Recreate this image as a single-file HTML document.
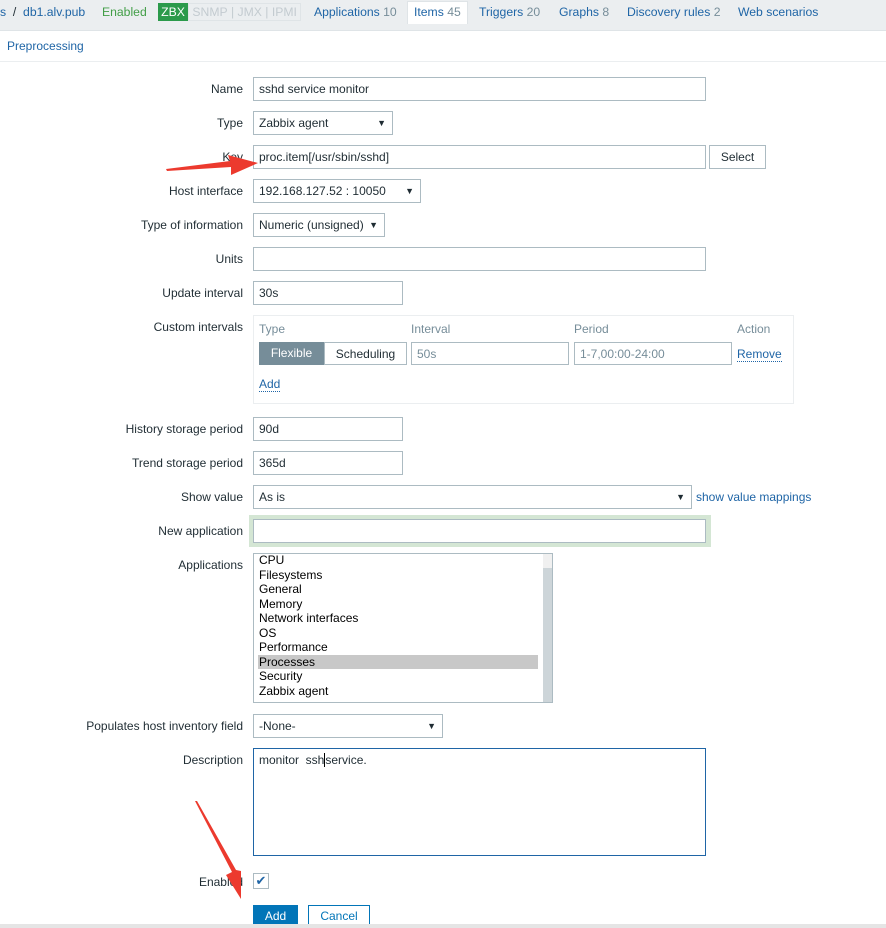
<!DOCTYPE html>
<html><head><meta charset="utf-8"><style>
body{margin:0;width:886px;height:928px;background:#fff;font-family:"Liberation Sans",Arial,sans-serif;font-size:12px;color:#1f2c33;position:relative;overflow:hidden}
.a{position:absolute}
.lbl{position:absolute;right:643px;text-align:right;white-space:nowrap;color:#1f2c33}
.in{position:absolute;box-sizing:border-box;border:1px solid #acbbc2;background:#fff;height:24px;padding:0 5px;line-height:22px;white-space:nowrap}
.sel::after{content:"▼";position:absolute;right:6px;top:0;font-size:9px}
.link{color:#1f65a6}
.tab{position:absolute;top:5px;color:#1f65a6;font-size:12.2px}
</style></head><body>
<div class="a" style="left:0;top:0;width:886px;height:30px;background:#ebeef0;border-bottom:1px solid #dfe4e7"></div>
<div class="tab" style="left:0"><span class="link">s</span> <span style="color:#1f2c33">&nbsp;/&nbsp;</span> <span class="link">db1.alv.pub</span></div>
<div class="tab" style="left:102px;color:#429e47">Enabled</div>
<div class="a" style="left:158px;top:3px;width:30px;height:18px;background:#2b9a4b;color:#fff;font-size:12.2px;text-align:center;line-height:18px">ZBX</div>
<div class="a" style="left:188px;top:3px;height:16px;border:1px solid #dfe4e7;color:#c3cbd0;font-size:12.2px;line-height:16px;white-space:nowrap">&nbsp;SNMP&nbsp;|&nbsp;JMX&nbsp;|&nbsp;IPMI&nbsp;</div>
<div class="tab" style="left:314px">Applications <span style="color:#768d99">10</span></div>
<div class="a" style="left:407px;top:1px;width:59px;height:22px;background:#fff;border:1px solid #dfe4e7;border-bottom:none"></div>
<div class="tab" style="left:414px">Items <span style="color:#768d99">45</span></div>
<div class="tab" style="left:479px">Triggers <span style="color:#768d99">20</span></div>
<div class="tab" style="left:559px">Graphs <span style="color:#768d99">8</span></div>
<div class="tab" style="left:627px">Discovery rules <span style="color:#768d99">2</span></div>
<div class="tab" style="left:738px">Web scenarios</div>
<div class="a link" style="left:7px;top:39px">Preprocessing</div>
<div class="a" style="left:0;top:61px;width:886px;height:1px;background:#ebeef0"></div>

<div class="lbl" style="top:82px">Name</div><div class="in" style="left:253px;top:77px;width:453px">sshd service monitor</div>
<div class="lbl" style="top:116px">Type</div><div class="in sel" style="left:253px;top:111px;width:140px">Zabbix agent</div>
<div class="lbl" style="top:150px">Key</div><div class="in" style="left:253px;top:145px;width:453px">proc.item[/usr/sbin/sshd]</div>
<div class="in" style="left:709px;top:145px;width:57px;text-align:center;background:#fff;border-color:#acbbc2">Select</div>
<div class="lbl" style="top:184px">Host interface</div><div class="in sel" style="left:253px;top:179px;width:168px">192.168.127.52 : 10050</div>
<div class="lbl" style="top:218px">Type of information</div><div class="in sel" style="left:253px;top:213px;width:132px">Numeric (unsigned)</div>
<div class="lbl" style="top:252px">Units</div><div class="in" style="left:253px;top:247px;width:453px"></div>
<div class="lbl" style="top:286px">Update interval</div><div class="in" style="left:253px;top:281px;width:150px">30s</div>
<div class="lbl" style="top:320px">Custom intervals</div>
<div class="a" style="left:253px;top:315px;width:539px;height:87px;border:1px solid #ebeef0;background:#fff"></div>
<div class="a" style="left:259px;top:322px;color:#768d99">Type</div>
<div class="a" style="left:411px;top:322px;color:#768d99">Interval</div>
<div class="a" style="left:574px;top:322px;color:#768d99">Period</div>
<div class="a" style="left:737px;top:322px;color:#768d99">Action</div>
<div class="a" style="left:259px;top:342px;width:65px;height:23px;background:#768d99;color:#fff;text-align:center;line-height:23px">Flexible</div>
<div class="in" style="left:324px;top:342px;width:83px;height:23px;text-align:center">Scheduling</div>
<div class="in" style="left:411px;top:342px;width:158px;height:23px;color:#768d99">50s</div>
<div class="in" style="left:574px;top:342px;width:158px;height:23px;color:#768d99">1-7,00:00-24:00</div>
<div class="a link" style="left:737px;top:347px;border-bottom:1px dotted #1f65a6">Remove</div>
<div class="a link" style="left:259px;top:377px;border-bottom:1px dotted #1f65a6">Add</div>
<div class="lbl" style="top:422px">History storage period</div><div class="in" style="left:253px;top:417px;width:150px">90d</div>
<div class="lbl" style="top:456px">Trend storage period</div><div class="in" style="left:253px;top:451px;width:150px">365d</div>
<div class="lbl" style="top:490px">Show value</div><div class="in sel" style="left:253px;top:485px;width:439px">As is</div>
<div class="a link" style="left:696px;top:490px">show value mappings</div>
<div class="lbl" style="top:524px">New application</div>
<div class="a" style="left:249px;top:515px;width:462px;height:32px;background:#d4e6d4"></div>
<div class="in" style="left:253px;top:519px;width:453px"></div>
<div class="lbl" style="top:558px">Applications</div>
<div class="a" style="left:253px;top:553px;width:300px;height:150px;box-sizing:border-box;border:1px solid #acbbc2;background:#fff"></div>
<div class="a" style="left:543px;top:554px;width:9px;height:148px;background:#cdd5d9"></div>
<div class="a" style="left:543px;top:554px;width:9px;height:14px;background:#f0f0f0"></div>
<div class="a" style="left:258px;top:655px;width:280px;height:14px;background:#c8c8c8"></div>
<div class="a" style="left:259px;top:553px;line-height:14.5px;font-size:12px;color:#000">CPU<br>Filesystems<br>General<br>Memory<br>Network interfaces<br>OS<br>Performance<br>Processes<br>Security<br>Zabbix agent</div>
<div class="lbl" style="top:719px">Populates host inventory field</div><div class="in sel" style="left:253px;top:714px;width:190px">-None-</div>
<div class="lbl" style="top:753px">Description</div>
<div class="in" style="left:253px;top:748px;width:453px;height:108px;border-color:#1f65a6;line-height:22px">monitor &nbsp;ssh<span style="border-left:1px solid #000"></span>service.</div>
<div class="lbl" style="top:875px">Enabled</div>
<div class="a" style="left:253px;top:873px;width:14px;height:14px;border:1px solid #acbbc2;background:#fff;color:#1f65a6;font-size:13px;line-height:14px;text-align:center">✔</div>
<div class="a" style="left:253px;top:905px;width:45px;height:23px;background:#0275b8;color:#fff;text-align:center;line-height:22px">Add</div>
<div class="a" style="left:308px;top:905px;width:60px;height:21px;border:1px solid #0275b8;color:#0275b8;text-align:center;line-height:21px;background:#fff">Cancel</div>
<div class="a" style="left:0;top:924px;width:886px;height:4px;background:#e5e5e5"></div>
<svg class="a" style="left:0;top:0" width="886" height="928">
<polygon points="166,169 230,161 228,155 258,163 231,175 231,167 167,171" fill="#ec3a2e"/>
<polygon points="195,801 232,872 226,875 241,899 241,871 236,870 197,801" fill="#ec3a2e"/>
</svg>
</body></html>
